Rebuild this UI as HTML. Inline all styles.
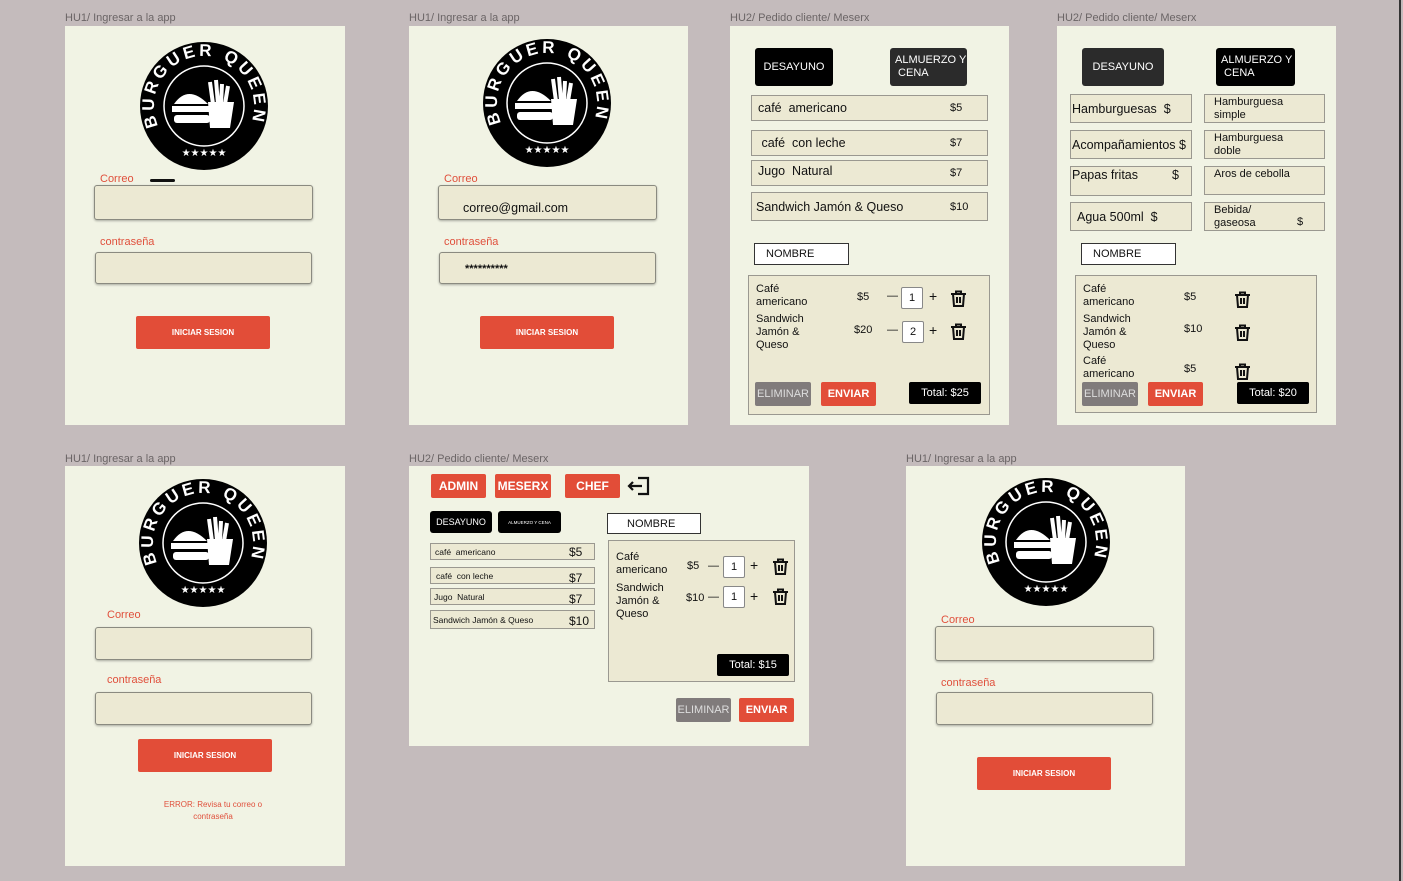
<!DOCTYPE html>
<html><head><meta charset="utf-8"><style>
*{margin:0;padding:0;box-sizing:border-box}
body{width:1403px;height:881px;background:#c4bbbc;position:relative;overflow:hidden;font-family:"Liberation Sans",sans-serif;color:#111}
div,span,svg{position:absolute}
.lbl{font-size:11px;color:#6b6566}
.fr{background:#f1f3e4}
.in{background:#ece9d3;border:1px solid #8a8a80;border-radius:3px;box-shadow:0 1px 2px rgba(0,0,0,.3)}
.rl{color:#e0503c;font-size:11px}
.btn{background:#e24d38;color:#fff;font-weight:bold;font-size:8px;display:flex;align-items:center;justify-content:center;border-radius:2px}
.row{background:#ece9d3;border:1.5px solid #9a9890;font-size:12.5px;padding-left:6px;display:flex;align-items:center}
.bk{background:#000;color:#fff;border-radius:3px;font-size:11px;display:flex;align-items:center;justify-content:center}
.nm{background:#fff;border:1.5px solid #333;font-size:11px;padding-left:11px;display:flex;align-items:center}
.pan{background:#ece9d3;border:1.5px solid #9a9890}
.t{font-size:11px;line-height:13px;white-space:nowrap}
.qb{background:#fff;border:1px solid #888;border-radius:2px;font-size:11px;display:flex;align-items:center;justify-content:center}
.gr{background:#807b7b;color:#ddd;font-size:11px;display:flex;align-items:center;justify-content:center;border-radius:2px}
.rd{background:#e24d38;color:#fff;font-weight:bold;font-size:11px;display:flex;align-items:center;justify-content:center;border-radius:2px}
</style></head><body>
<div style="left:1399px;top:0;width:2px;height:881px;background:#333"></div>

<!-- F1 -->
<span class="lbl" style="left:65px;top:12px">HU1/ Ingresar a la app</span>
<div class="fr" style="left:65px;top:26px;width:280px;height:399px"></div>
<svg style="left:140px;top:42px" width="128" height="128" viewBox="0 0 128 128"><circle cx="64" cy="64" r="64" fill="#000"/><path id="a1" d="M18.2,84 A50 50 0 1 1 109.8,84" fill="none"/><text fill="#fff" font-family="Liberation Sans" font-weight="bold" font-size="17"><textPath href="#a1" textLength="192">BURGUER QUEEN</textPath></text><circle cx="64" cy="64" r="40" fill="none" stroke="#fff" stroke-width="1.5"/><path d="M70 40l3 22M76 38l2 24M82 42l-1 20M88 44l-3 18" stroke="#fff" stroke-width="4"/><path d="M68 60h26l-4 26h-20z" fill="#fff"/><path d="M34 62q14-20 34 0z" fill="#fff"/><rect x="32" y="64" width="38" height="6" fill="#fff"/><rect x="34" y="73" width="36" height="8" rx="3" fill="#fff"/><text x="64" y="114" fill="#fff" font-size="10" text-anchor="middle" font-family="DejaVu Sans">★★★★★</text></svg>
<span class="rl" style="left:100px;top:173px">Correo</span>
<div style="left:150px;top:179px;width:25px;height:3px;background:#111;border-radius:2px"></div>
<div class="in" style="left:94px;top:185px;width:219px;height:35px"></div>
<span class="rl" style="left:100px;top:236px">contraseña</span>
<div class="in" style="left:95px;top:252px;width:217px;height:32px"></div>
<div class="btn" style="left:136px;top:316px;width:134px;height:33px">INICIAR SESION</div>

<!-- F2 -->
<span class="lbl" style="left:409px;top:12px">HU1/ Ingresar a la app</span>
<div class="fr" style="left:409px;top:26px;width:279px;height:399px"></div>
<svg style="left:483px;top:39px" width="128" height="128" viewBox="0 0 128 128"><circle cx="64" cy="64" r="64" fill="#000"/><path id="a2" d="M18.2,84 A50 50 0 1 1 109.8,84" fill="none"/><text fill="#fff" font-family="Liberation Sans" font-weight="bold" font-size="17"><textPath href="#a2" textLength="192">BURGUER QUEEN</textPath></text><circle cx="64" cy="64" r="40" fill="none" stroke="#fff" stroke-width="1.5"/><path d="M70 40l3 22M76 38l2 24M82 42l-1 20M88 44l-3 18" stroke="#fff" stroke-width="4"/><path d="M68 60h26l-4 26h-20z" fill="#fff"/><path d="M34 62q14-20 34 0z" fill="#fff"/><rect x="32" y="64" width="38" height="6" fill="#fff"/><rect x="34" y="73" width="36" height="8" rx="3" fill="#fff"/><text x="64" y="114" fill="#fff" font-size="10" text-anchor="middle" font-family="DejaVu Sans">★★★★★</text></svg>
<span class="rl" style="left:444px;top:173px">Correo</span>
<div class="in" style="left:438px;top:185px;width:219px;height:35px"></div>
<span style="left:463px;top:201px;font-size:12.5px">correo@gmail.com</span>
<span class="rl" style="left:444px;top:236px">contraseña</span>
<div class="in" style="left:439px;top:252px;width:217px;height:32px"></div>
<span style="left:465px;top:263px;font-size:11px;font-weight:bold">**********</span>
<div class="btn" style="left:480px;top:316px;width:134px;height:33px">INICIAR SESION</div>

<!-- F3 -->
<span class="lbl" style="left:730px;top:12px">HU2/ Pedido cliente/ Meserx</span>
<div class="fr" style="left:730px;top:26px;width:279px;height:399px"></div>
<div class="bk" style="left:755px;top:48px;width:78px;height:38px">DESAYUNO</div>
<div class="bk" style="left:890px;top:48px;width:77px;height:38px;background:#2b2b2b;justify-content:flex-start;padding-left:5px;line-height:13px">ALMUERZO Y<br>&nbsp;CENA</div>
<div class="row" style="left:751px;top:95px;width:237px;height:26px">café&nbsp; americano<span style="left:198px;font-size:11px">$5</span></div>
<div class="row" style="left:751px;top:130px;width:237px;height:26px">&nbsp;café&nbsp; con leche<span style="left:198px;font-size:11px">$7</span></div>
<div class="row" style="left:751px;top:160px;width:237px;height:26px;align-items:flex-start;padding-top:3px">Jugo&nbsp; Natural<span style="left:198px;top:6px;font-size:11px">$7</span></div>
<div class="row" style="left:751px;top:192px;width:237px;height:29px;padding-left:4px">Sandwich Jamón &amp; Queso<span style="left:198px;font-size:11px">$10</span></div>
<div class="nm" style="left:754px;top:243px;width:95px;height:22px">NOMBRE</div>
<div class="pan" style="left:748px;top:275px;width:242px;height:140px"></div>
<span class="t" style="left:756px;top:283px">Café<br>americano</span>
<span class="t" style="left:857px;top:291px">$5</span>
<span class="t" style="left:887px;top:290px">—</span><div class="qb" style="left:901px;top:287px;width:22px;height:22px">1</div><span class="t" style="left:929px;top:290px;font-size:14px">+</span>
<svg style="left:950px;top:290px" width="17" height="17" viewBox="0 0 17 17"><path d="M1 4h15M6 4V1.5h5V4M3 4l1 12h9l1-12M7 7v6M10 7v6" fill="none" stroke="#111" stroke-width="2"/></svg>
<span class="t" style="left:756px;top:313px">Sandwich<br>Jamón &amp;<br>Queso</span>
<span class="t" style="left:854px;top:324px">$20</span>
<span class="t" style="left:887px;top:324px">—</span><div class="qb" style="left:902px;top:321px;width:22px;height:22px">2</div><span class="t" style="left:929px;top:324px;font-size:14px">+</span>
<svg style="left:950px;top:323px" width="17" height="17" viewBox="0 0 17 17"><path d="M1 4h15M6 4V1.5h5V4M3 4l1 12h9l1-12M7 7v6M10 7v6" fill="none" stroke="#111" stroke-width="2"/></svg>
<div class="gr" style="left:755px;top:382px;width:56px;height:24px">ELIMINAR</div>
<div class="rd" style="left:821px;top:382px;width:55px;height:24px">ENVIAR</div>
<div class="bk" style="left:909px;top:382px;width:72px;height:22px;border-radius:2px">Total: $25</div>

<!-- F4 -->
<span class="lbl" style="left:1057px;top:12px">HU2/ Pedido cliente/ Meserx</span>
<div class="fr" style="left:1057px;top:26px;width:279px;height:399px"></div>
<div class="bk" style="left:1082px;top:48px;width:82px;height:38px;background:#2b2b2b">DESAYUNO</div>
<div class="bk" style="left:1216px;top:48px;width:79px;height:38px;justify-content:flex-start;padding-left:5px;line-height:13px">ALMUERZO Y<br>&nbsp;CENA</div>
<div class="row" style="left:1070px;top:94px;width:122px;height:29px;padding-left:1px">Hamburguesas&nbsp; $</div>
<div class="row" style="left:1070px;top:130px;width:122px;height:29px;padding-left:1px">Acompañamientos $</div>
<div class="row" style="left:1070px;top:166px;width:122px;height:30px;padding-left:1px;align-items:flex-start;padding-top:1px">Papas fritas<span style="left:101px;top:1px">$</span></div>
<div class="row" style="left:1070px;top:202px;width:122px;height:29px">Agua 500ml&nbsp; $</div>
<div class="row" style="left:1204px;top:94px;width:121px;height:29px;font-size:11px;line-height:13px;padding-left:9px">Hamburguesa<br>simple</div>
<div class="row" style="left:1204px;top:130px;width:121px;height:29px;font-size:11px;line-height:13px;padding-left:9px">Hamburguesa<br>doble</div>
<div class="row" style="left:1204px;top:166px;width:121px;height:29px;font-size:11px;padding-left:9px;align-items:flex-start;padding-top:1px">Aros de cebolla</div>
<div class="row" style="left:1204px;top:202px;width:121px;height:29px;font-size:11px;line-height:13px;padding-left:9px">Bebida/<br>gaseosa<span style="left:92px;top:13px">$</span></div>
<div class="nm" style="left:1081px;top:243px;width:95px;height:22px">NOMBRE</div>
<div class="pan" style="left:1075px;top:275px;width:242px;height:138px"></div>
<span class="t" style="left:1083px;top:283px">Café<br>americano</span><span class="t" style="left:1184px;top:291px">$5</span>
<svg style="left:1234px;top:291px" width="17" height="17" viewBox="0 0 17 17"><path d="M1 4h15M6 4V1.5h5V4M3 4l1 12h9l1-12M7 7v6M10 7v6" fill="none" stroke="#111" stroke-width="2"/></svg>
<span class="t" style="left:1083px;top:313px">Sandwich<br>Jamón &amp;<br>Queso</span><span class="t" style="left:1184px;top:323px">$10</span>
<svg style="left:1234px;top:324px" width="17" height="17" viewBox="0 0 17 17"><path d="M1 4h15M6 4V1.5h5V4M3 4l1 12h9l1-12M7 7v6M10 7v6" fill="none" stroke="#111" stroke-width="2"/></svg>
<span class="t" style="left:1083px;top:355px">Café<br>americano</span><span class="t" style="left:1184px;top:363px">$5</span>
<svg style="left:1234px;top:363px" width="17" height="17" viewBox="0 0 17 17"><path d="M1 4h15M6 4V1.5h5V4M3 4l1 12h9l1-12M7 7v6M10 7v6" fill="none" stroke="#111" stroke-width="2"/></svg>
<div class="gr" style="left:1082px;top:382px;width:56px;height:24px">ELIMINAR</div>
<div class="rd" style="left:1148px;top:382px;width:55px;height:24px">ENVIAR</div>
<div class="bk" style="left:1237px;top:382px;width:72px;height:22px;border-radius:2px">Total: $20</div>

<!-- F5 -->
<span class="lbl" style="left:65px;top:453px">HU1/ Ingresar a la app</span>
<div class="fr" style="left:65px;top:466px;width:280px;height:400px"></div>
<svg style="left:139px;top:479px" width="128" height="128" viewBox="0 0 128 128"><circle cx="64" cy="64" r="64" fill="#000"/><path id="a5" d="M18.2,84 A50 50 0 1 1 109.8,84" fill="none"/><text fill="#fff" font-family="Liberation Sans" font-weight="bold" font-size="17"><textPath href="#a5" textLength="192">BURGUER QUEEN</textPath></text><circle cx="64" cy="64" r="40" fill="none" stroke="#fff" stroke-width="1.5"/><path d="M70 40l3 22M76 38l2 24M82 42l-1 20M88 44l-3 18" stroke="#fff" stroke-width="4"/><path d="M68 60h26l-4 26h-20z" fill="#fff"/><path d="M34 62q14-20 34 0z" fill="#fff"/><rect x="32" y="64" width="38" height="6" fill="#fff"/><rect x="34" y="73" width="36" height="8" rx="3" fill="#fff"/><text x="64" y="114" fill="#fff" font-size="10" text-anchor="middle" font-family="DejaVu Sans">★★★★★</text></svg>
<span class="rl" style="left:107px;top:609px">Correo</span>
<div class="in" style="left:95px;top:627px;width:217px;height:33px"></div>
<span class="rl" style="left:107px;top:674px">contraseña</span>
<div class="in" style="left:95px;top:692px;width:217px;height:33px"></div>
<div class="btn" style="left:138px;top:739px;width:134px;height:33px">INICIAR SESION</div>
<span style="left:113px;top:799px;width:200px;text-align:center;color:#e0503c;font-size:8px;line-height:12px">ERROR: Revisa tu correo o<br>contraseña</span>

<!-- F6 -->
<span class="lbl" style="left:409px;top:453px">HU2/ Pedido cliente/ Meserx</span>
<div class="fr" style="left:409px;top:466px;width:400px;height:280px"></div>
<div class="rd" style="left:431px;top:474px;width:55px;height:24px;font-size:12px">ADMIN</div>
<div class="rd" style="left:495px;top:474px;width:56px;height:24px;font-size:12px">MESERX</div>
<div class="rd" style="left:565px;top:474px;width:55px;height:24px;font-size:12px">CHEF</div>
<svg style="left:626px;top:475px" width="26" height="22" viewBox="0 0 26 22"><path d="M12 3h10v16h-10M3 11h13M7 7l-4 4 4 4" fill="none" stroke="#111" stroke-width="2.2"/></svg>
<div class="bk" style="left:430px;top:511px;width:62px;height:22px;font-size:9px">DESAYUNO</div>
<div class="bk" style="left:498px;top:511px;width:63px;height:22px;font-size:4.5px">ALMUERZO Y CENA</div>
<div class="row" style="left:430px;top:543px;width:165px;height:17px;font-size:8.5px;padding-left:4px">café&nbsp; americano<span style="left:138px;font-size:12px">$5</span></div>
<div class="row" style="left:430px;top:567px;width:165px;height:17px;font-size:8.5px;padding-left:5px">café&nbsp; con leche<span style="left:138px;top:3px;font-size:12px">$7</span></div>
<div class="row" style="left:430px;top:588px;width:165px;height:17px;font-size:8.5px;padding-left:3px">Jugo&nbsp; Natural<span style="left:138px;top:3px;font-size:12px">$7</span></div>
<div class="row" style="left:430px;top:610px;width:165px;height:19px;font-size:8.5px;padding-left:2px">Sandwich Jamón &amp; Queso<span style="left:138px;top:3px;font-size:12px">$10</span></div>
<div class="nm" style="left:607px;top:513px;width:94px;height:21px;padding-left:19px">NOMBRE</div>
<div class="pan" style="left:608px;top:540px;width:187px;height:142px"></div>
<span class="t" style="left:616px;top:551px">Café<br>americano</span><span class="t" style="left:687px;top:560px">$5</span>
<span class="t" style="left:708px;top:560px">—</span><div class="qb" style="left:723px;top:556px;width:22px;height:22px">1</div><span class="t" style="left:750px;top:559px;font-size:14px">+</span>
<svg style="left:772px;top:558px" width="17" height="17" viewBox="0 0 17 17"><path d="M1 4h15M6 4V1.5h5V4M3 4l1 12h9l1-12M7 7v6M10 7v6" fill="none" stroke="#111" stroke-width="2"/></svg>
<span class="t" style="left:616px;top:582px">Sandwich<br>Jamón &amp;<br>Queso</span><span class="t" style="left:686px;top:592px">$10</span>
<span class="t" style="left:708px;top:591px">—</span><div class="qb" style="left:723px;top:586px;width:22px;height:22px">1</div><span class="t" style="left:750px;top:590px;font-size:14px">+</span>
<svg style="left:772px;top:588px" width="17" height="17" viewBox="0 0 17 17"><path d="M1 4h15M6 4V1.5h5V4M3 4l1 12h9l1-12M7 7v6M10 7v6" fill="none" stroke="#111" stroke-width="2"/></svg>
<div class="bk" style="left:717px;top:654px;width:72px;height:22px;border-radius:2px">Total: $15</div>
<div class="gr" style="left:676px;top:698px;width:55px;height:24px">ELIMINAR</div>
<div class="rd" style="left:739px;top:698px;width:55px;height:24px">ENVIAR</div>

<!-- F7 -->
<span class="lbl" style="left:906px;top:453px">HU1/ Ingresar a la app</span>
<div class="fr" style="left:906px;top:466px;width:279px;height:400px"></div>
<svg style="left:982px;top:478px" width="128" height="128" viewBox="0 0 128 128"><circle cx="64" cy="64" r="64" fill="#000"/><path id="a7" d="M18.2,84 A50 50 0 1 1 109.8,84" fill="none"/><text fill="#fff" font-family="Liberation Sans" font-weight="bold" font-size="17"><textPath href="#a7" textLength="192">BURGUER QUEEN</textPath></text><circle cx="64" cy="64" r="40" fill="none" stroke="#fff" stroke-width="1.5"/><path d="M70 40l3 22M76 38l2 24M82 42l-1 20M88 44l-3 18" stroke="#fff" stroke-width="4"/><path d="M68 60h26l-4 26h-20z" fill="#fff"/><path d="M34 62q14-20 34 0z" fill="#fff"/><rect x="32" y="64" width="38" height="6" fill="#fff"/><rect x="34" y="73" width="36" height="8" rx="3" fill="#fff"/><text x="64" y="114" fill="#fff" font-size="10" text-anchor="middle" font-family="DejaVu Sans">★★★★★</text></svg>
<span class="rl" style="left:941px;top:614px">Correo</span>
<div class="in" style="left:935px;top:626px;width:219px;height:35px"></div>
<span class="rl" style="left:941px;top:677px">contraseña</span>
<div class="in" style="left:936px;top:692px;width:217px;height:33px"></div>
<div class="btn" style="left:977px;top:757px;width:134px;height:33px">INICIAR SESION</div>
</body></html>
